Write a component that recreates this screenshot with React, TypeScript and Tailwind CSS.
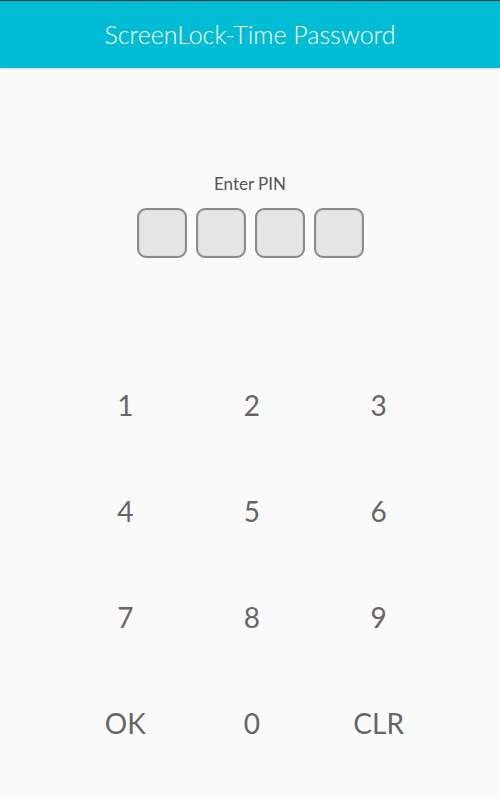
const KEYS = ["1", "2", "3", "4", "5", "6", "7", "8", "9", "OK", "0", "CLR"];

export default function App() {
  return (
    <div className="w-[500px] h-[799px] bg-[#fafafa] flex flex-col" style={{ fontFamily: "Lato, 'Noto Sans', sans-serif" }}>
      <div className="h-[68px] shrink-0 bg-[#00bcd4] border-t border-[#0b3b47] flex items-center justify-center shadow-[0_1px_2px_rgba(0,0,0,0.15)]">
        <h1 className="text-white text-[25px] font-light">ScreenLock-Time Password</h1>
      </div>
      <div className="flex flex-col items-center pt-[106px]">
        <p className="text-[#555] text-[17px] leading-[20px]">Enter PIN</p>
        <div className="flex gap-[9px] mt-[14px] ml-[1px]">
          {[0, 1, 2, 3].map((i) => (
            <div key={i} className="w-[50px] h-[50px] rounded-[9px] border-2 border-[#8a8a8a] bg-[#e6e6e6] shadow-[inset_0_0_2px_rgba(0,0,0,0.15)]" />
          ))}
        </div>
      </div>
      <div className="grid grid-cols-3 pl-[62px] pr-[58px] mt-[94px]">
        {KEYS.map((k) => (
          <div key={k} className="h-[106px] flex items-center justify-center text-[#666] text-[28px]">
            {k}
          </div>
        ))}
      </div>
    </div>
  );
}
